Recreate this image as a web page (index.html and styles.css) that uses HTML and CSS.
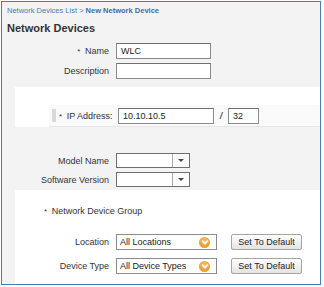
FILE: index.html
```html
<!DOCTYPE html>
<html>
<head>
<meta charset="utf-8">
<link rel="stylesheet" href="styles.css">
</head>
<body>
<div class="frame">
  <div class="head">
    <div class="crumb"><span class="crumb-link">Network Devices List</span> <span class="crumb-sep">&gt;</span> <span class="crumb-cur">New Network Device</span></div>
    <div class="title">Network Devices</div>
  </div>
  <div class="sec sec-a">
    <div class="row">
      <label class="lbl"><span class="req">*</span> Name</label>
      <div class="txt w-name">WLC</div>
    </div>
    <div class="row">
      <label class="lbl">Description</label>
      <div class="txt w-name"></div>
    </div>
  </div>
  <div class="sec sec-b">
    <div class="iprow">
      <span class="grip"></span>
      <label class="iplbl"><span class="req">*</span> IP Address:</label>
      <div class="txt w-ip">10.10.10.5</div>
      <span class="slash">/</span>
      <div class="txt w-mask">32</div>
    </div>
  </div>
  <div class="sec sec-c">
    <div class="row">
      <label class="lbl">Model Name</label>
      <div class="combo"><span class="combo-val"></span><span class="combo-btn"><span class="tri"></span></span></div>
    </div>
    <div class="row">
      <label class="lbl">Software Version</label>
      <div class="combo"><span class="combo-val"></span><span class="combo-btn"><span class="tri"></span></span></div>
    </div>
  </div>
  <div class="sec sec-d">
    <div class="ndg"><span class="req">*</span> Network Device Group</div>
    <div class="row row-ndg">
      <label class="lbl">Location</label>
      <div class="sel"><span>All Locations</span><span class="orb"><svg width="8" height="6" viewBox="0 0 8 6"><path d="M1 1.5 L4 4.5 L7 1.5" fill="none" stroke="#fff" stroke-width="1.6"/></svg></span></div>
      <button class="btn">Set To Default</button>
    </div>
    <div class="row row-ndg">
      <label class="lbl">Device Type</label>
      <div class="sel"><span>All Device Types</span><span class="orb"><svg width="8" height="6" viewBox="0 0 8 6"><path d="M1 1.5 L4 4.5 L7 1.5" fill="none" stroke="#fff" stroke-width="1.6"/></svg></span></div>
      <button class="btn">Set To Default</button>
    </div>
  </div>
</div>
</body>
</html>
```

FILE: styles.css
```css
* { box-sizing: border-box; }
html, body { margin: 0; padding: 0; background: #fff; }
body { font-family: "Liberation Sans", Arial, sans-serif; color: #333; font-size: 9px; }

.frame {
  width: 320px;
  height: 284px;
  margin: 1px 0 0 1px;
  border: 1px solid #4a7bb9;
  background: #f3f3f3;
  display: flex;
  flex-direction: column;
}

.head { padding: 4px 0 0 5px; height: 34px; }
.crumb { font-size: 7.5px; line-height: 10px; color: #4a7ab8; white-space: nowrap; }
.crumb-sep { color: #4a7ab8; }
.crumb-cur { font-weight: bold; color: #3b6eae; }
.title { margin-top: 6px; font-size: 11px; line-height: 13px; font-weight: bold; color: #333; }

.sec { margin-left: 13px; }
.sec-a { padding: 7px 0 8px; display: flex; flex-direction: column; gap: 4px; }
.sec-b { background: #fff; padding: 18px 0 0 34px; height: 40px; }
.sec-c { padding: 26px 0 3px; display: flex; flex-direction: column; gap: 4px; }
.sec-d { background: #fff; flex: 1; padding-top: 16px; }

.row { display: flex; align-items: center; height: 16px; }
.lbl { width: 95px; text-align: right; padding-right: 1px; flex: none; margin-right: 6px; white-space: nowrap; }
.req { font-size: 8px; margin-right: 2px; }

.txt {
  height: 16px;
  border: 1px solid #8a8a8a;
  border-top-color: #6f6f6f;
  background: #fff;
  padding: 0 4px;
  line-height: 14px;
  font-size: 9px;
  color: #222;
}
.w-name { width: 95px; }
.w-ip { width: 96px; }
.w-mask { width: 31px; }

.iprow {
  display: flex;
  align-items: center;
  height: 22px;
  border-bottom: 1px solid #e6e6e6;
  background: #fafafa;
  padding-left: 3px;
}
.grip {
  width: 4px; height: 13px;
  background-image: radial-gradient(circle, #b4b4b4 0.6px, transparent 0.8px);
  background-size: 2px 2px;
  margin-right: 3px;
}
.iplbl { width: 53px; white-space: nowrap; margin-right: 6px; }
.slash { width: 14px; text-align: center; font-weight: bold; font-style: italic; color: #555; }

.sec-c .row { height: 15px; }
.combo {
  width: 74px; height: 15px;
  border: 1px solid #6f6f6f;
  background: #fff;
  display: flex;
}
.combo-val { flex: 1; }
.combo-btn {
  width: 17px; border-left: 1px solid #aaa;
  display: flex; align-items: center; justify-content: center;
  background: #fbfbfb;
}
.tri { width: 0; height: 0; border-left: 3px solid transparent; border-right: 3px solid transparent; border-top: 3px solid #444; }

.ndg { padding-left: 29px; line-height: 10px; }
.row-ndg { margin-top: 8px; }
.ndg + .row-ndg { margin-top: 17px; }
.sel {
  width: 101px; height: 16px;
  border: 1px solid #8a8a8a;
  background: #fff;
  display: flex; align-items: center; justify-content: space-between;
  padding: 0 6px 0 3px;
  color: #222;
}
.orb {
  width: 11px; height: 11px; border-radius: 50%;
  background: radial-gradient(circle at 50% 35%, #f7c06a, #e38f1b);
  display: flex; align-items: center; justify-content: center;
}
.btn {
  margin-left: 14px;
  width: 71px; height: 16px;
  border: 1px solid #a5a5a5;
  border-radius: 2px;
  background: linear-gradient(#ffffff, #e3e3e3);
  font-family: "Liberation Sans", Arial, sans-serif;
  font-size: 9px;
  color: #222;
  padding: 0;
}
```
